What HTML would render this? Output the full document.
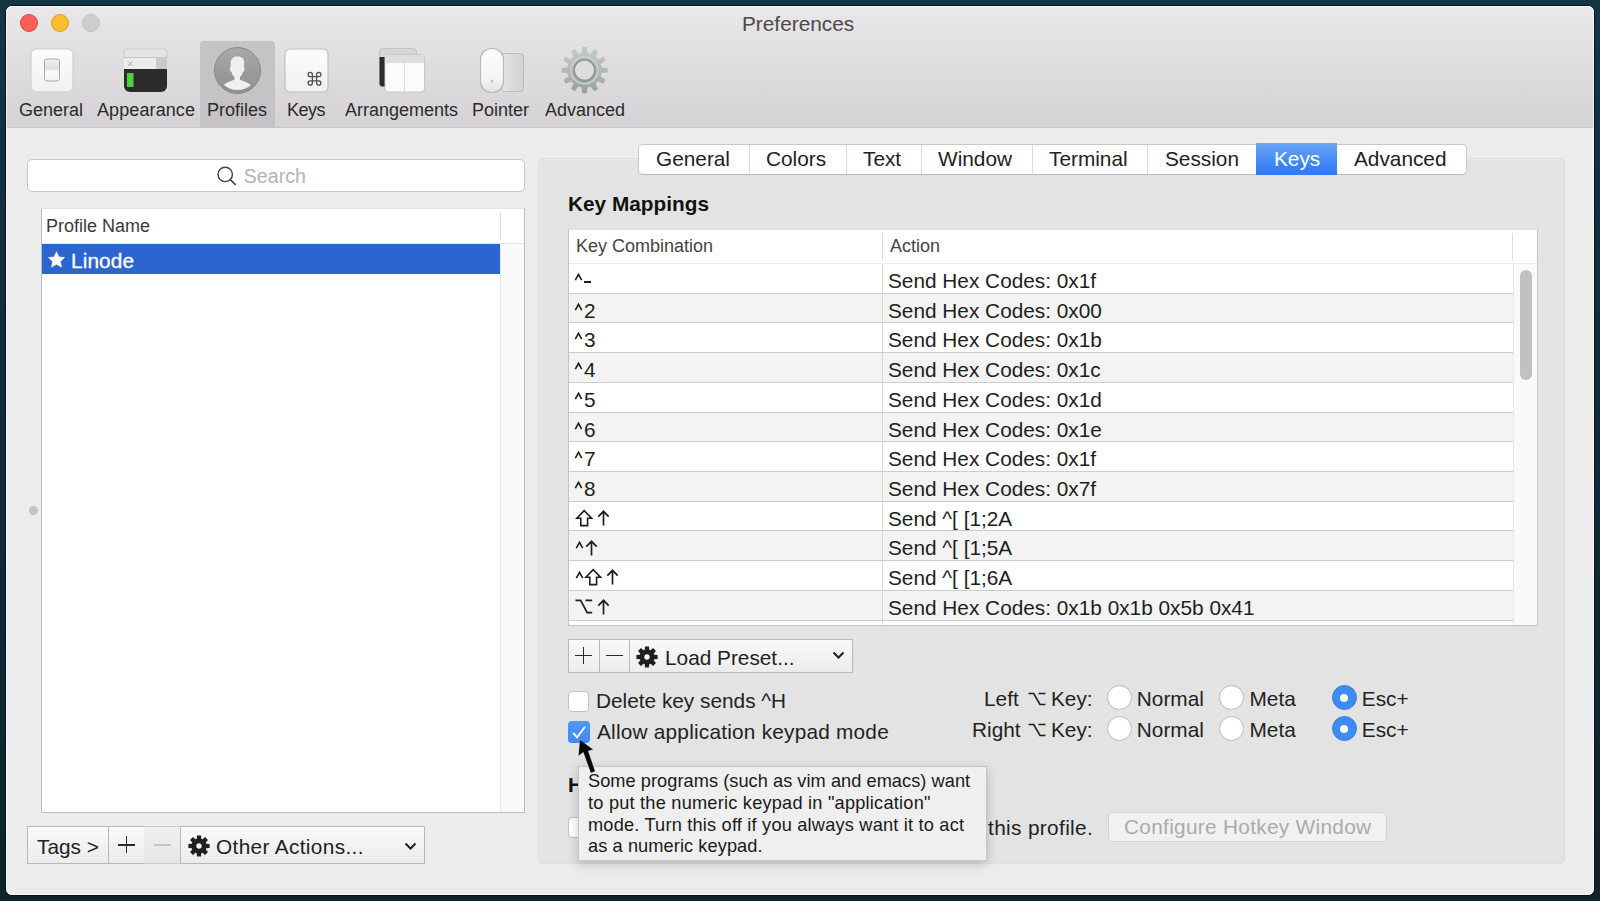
<!DOCTYPE html>
<html><head><meta charset="utf-8">
<style>
*{box-sizing:border-box;margin:0;padding:0}
html,body{width:1600px;height:901px;overflow:hidden;background:linear-gradient(#133647,#11293a 50%,#10222c);font-family:"Liberation Sans",sans-serif;color:#222}
.a{position:absolute}
.t{position:absolute;white-space:nowrap;line-height:1}
#win{position:absolute;left:6px;top:6px;width:1588px;height:889px;border-radius:6px;background:#ececec;box-shadow:0 0 0 1px #07141b}
#hl{position:absolute;left:6px;top:6px;width:1588px;height:889px;border-radius:6px;border:1.5px solid rgba(248,250,252,.85)}
#tb{position:absolute;left:6px;top:6px;width:1588px;height:122px;border-radius:6px 6px 0 0;background:linear-gradient(#e9e7e9,#d4d2d4);border-bottom:1px solid #c8c6c8}
.lbl{font-size:18px;color:#2b2b2b}
.row{position:absolute;left:569px;width:944px;height:29.71px;border-bottom:1px solid #cdcdcd}
.row .k{position:absolute;left:6px;top:7px;font-size:20.8px;line-height:1;white-space:nowrap;color:#1e1e1e}
.row .v{position:absolute;left:319px;top:7px;font-size:20.8px;line-height:1;white-space:nowrap;color:#1e1e1e}
.row .sep{position:absolute;left:313px;top:0;width:1px;height:100%;background:#d8d8d8}
.g{background:#f3f3f3}
.w{background:#fff}
.btn{position:absolute;background:linear-gradient(#f9f9f9,#ececec);border:1px solid #b8b8b8}
.f{font-size:20.8px;color:#222}
</style></head><body>
<div id="win"></div>
<div id="tb"></div>
<div id="hl"></div>
<!-- traffic lights -->
<div class="a" style="left:19.5px;top:14.3px;width:18px;height:18px;border-radius:50%;background:#fc5f57;border:1px solid #e0463f"></div>
<div class="a" style="left:50.5px;top:14.3px;width:18px;height:18px;border-radius:50%;background:#fdbc2e;border:1px solid #e0a020"></div>
<div class="a" style="left:81.5px;top:14.3px;width:18px;height:18px;border-radius:50%;background:#cfcdcf;border:1px solid #c2c0c2"></div>
<div class="t" style="left:742px;top:14px;font-size:20.8px;color:#4b4b4b">Preferences</div>

<!-- profiles highlight -->
<div class="a" style="left:200px;top:41px;width:75px;height:87px;background:#c5c3c5;border-radius:4px 4px 0 0"></div>

<!-- toolbar icons -->
<svg class="a" style="left:29px;top:47px" width="46" height="47" viewBox="0 0 46 47">
 <defs><linearGradient id="gw" x1="0" y1="0" x2="0" y2="1"><stop offset="0" stop-color="#fdfdfd"/><stop offset="1" stop-color="#f0f0f2"/></linearGradient>
 <linearGradient id="sw" x1="0" y1="0" x2="0" y2="1"><stop offset="0" stop-color="#f4f4f4"/><stop offset=".45" stop-color="#dcdcdc"/><stop offset=".55" stop-color="#fafafa"/><stop offset="1" stop-color="#f2f2f2"/></linearGradient></defs>
 <rect x="2" y="2" width="42" height="43" rx="5.5" fill="url(#gw)" stroke="#c9c9cb" stroke-width="1"/>
 <rect x="15.5" y="12" width="15" height="22" rx="2.5" fill="url(#sw)" stroke="#a9a9a9" stroke-width="1"/>
</svg>
<svg class="a" style="left:122px;top:47px" width="47" height="47" viewBox="0 0 47 47">
 <path d="M2 5a3 3 0 0 1 3-3h37a3 3 0 0 1 3 3v6H2z" fill="#e4e4e4" stroke="#cacaca" stroke-width="1"/><line x1="2" y1="11" x2="45" y2="11" stroke="#b9b9b9" stroke-width="1"/>
 <rect x="2" y="11" width="43" height="11" fill="#ececec"/>
 <rect x="34" y="11" width="11" height="11" fill="#c9c9c9"/>
 <path d="M6 14.5l4.5 4.5M10.5 14.5L6 19" stroke="#a79fb3" stroke-width="1"/>
 <path d="M2 22h43v17a6 6 0 0 1-6 6H8a6 6 0 0 1-6-6z" fill="#2b2b2b"/>
 <rect x="5" y="26" width="6.5" height="14" fill="#4fd23f"/>
</svg>
<svg class="a" style="left:212px;top:46px" width="51" height="49" viewBox="0 0 51 49">
 <defs><linearGradient id="pc" x1="0" y1="0" x2="0" y2="1"><stop offset="0" stop-color="#a9a9a9"/><stop offset="1" stop-color="#8f8f8f"/></linearGradient>
 <clipPath id="pcl"><circle cx="25.5" cy="23.5" r="20.5"/></clipPath></defs>
 <circle cx="25.5" cy="24.5" r="23" fill="url(#pc)" stroke="#878787" stroke-width="1"/>
 <path clip-path="url(#pcl)" d="M18.8 16c0-3.6 2.9-5.6 6.7-5.6s6.7 2 6.7 5.6l-.3 5.5c.8.2 1 1 .6 2.1l-.6 1.5c-.3.6-.6.8-1 .8-.6 2.6-1.9 4.3-3 5.2v2.6c2 .8 8.5 2.8 11.5 5.6V52H11V39.3c3-2.8 9.5-4.8 11.5-5.6v-2.6c-1.1-.9-2.4-2.6-3-5.2-.4 0-.7-.2-1-.8l-.6-1.5c-.4-1.1-.2-1.9.6-2.1z" fill="#efefef"/>
</svg>
<svg class="a" style="left:283px;top:47px" width="47" height="47" viewBox="0 0 47 47">
 <rect x="2" y="2" width="43" height="43" rx="5" fill="url(#gw)" stroke="#bdbdbf" stroke-width="1.1"/>
 <g fill="none" stroke="#4f4f4f" stroke-width="1.3"><path d="M29.4 29.6H33.6V33.8H29.4Z"/><path d="M29.4 29.6v-2.15a2.15 2.15 0 1 0-2.15 2.15h2.15M33.6 29.6v-2.15a2.15 2.15 0 1 1 2.15 2.15h-2.15M29.4 33.8v2.15a2.15 2.15 0 1 1-2.15-2.15h2.15M33.6 33.8v2.15a2.15 2.15 0 1 0 2.15-2.15h-2.15"/></g>
</svg>
<svg class="a" style="left:378px;top:47px" width="48" height="47" viewBox="0 0 48 47">
 <rect x="1.5" y="1.5" width="37" height="38" rx="3" fill="#d6d6d6" stroke="#c2c2c2" stroke-width="1"/>
 <path d="M1.5 10h6v29.5h-3a3 3 0 0 1-3-3z" fill="#2e2e2e"/>
 <rect x="7" y="7.5" width="39.5" height="37.5" rx="3" fill="#fbfbfb" stroke="#c6c6c6" stroke-width="1"/>
 <rect x="7.5" y="8" width="38.5" height="8" fill="#dedede"/>
 <line x1="26.5" y1="16" x2="26.5" y2="44.5" stroke="#dadada" stroke-width="1"/>
</svg>
<svg class="a" style="left:479px;top:47px" width="47" height="47" viewBox="0 0 47 47">
 <defs><linearGradient id="tp" x1="0" y1="0" x2="1" y2="0"><stop offset="0" stop-color="#e4e4e4"/><stop offset="1" stop-color="#d2d2d2"/></linearGradient></defs>
 <rect x="22.5" y="6.5" width="22" height="38" rx="3" fill="url(#tp)" stroke="#bdbdbd" stroke-width="1"/>
 <defs><linearGradient id="ms" x1="0" y1="0" x2="0" y2="1"><stop offset="0" stop-color="#fdfdfd"/><stop offset=".7" stop-color="#f4f4f4"/><stop offset="1" stop-color="#e2e2e2"/></linearGradient></defs><rect x="1.5" y="1.5" width="23" height="44" rx="11" fill="url(#ms)" stroke="#b9b9b9" stroke-width="1.2"/>
 <circle cx="13" cy="34" r="1.6" fill="#c4c4c4"/>
</svg>
<svg class="a" style="left:559px;top:45px" width="51" height="51" viewBox="0 0 51 51">
 <defs><linearGradient id="gg" x1="0" y1="0" x2="0" y2="1"><stop offset="0" stop-color="#c2c7c7"/><stop offset=".6" stop-color="#b0b5b5"/><stop offset="1" stop-color="#969b9b"/></linearGradient></defs>
 <path id="gear" fill="url(#gg)" fill-rule="evenodd" d="M22.73 8.02 L23.30 2.10 L27.70 2.10 L28.27 8.02 L31.69 8.94 L35.14 4.10 L38.95 6.30 L36.49 11.71 L38.99 14.21 L44.40 11.75 L46.60 15.56 L41.76 19.01 L42.68 22.43 L48.60 23.00 L48.60 27.40 L42.68 27.97 L41.76 31.39 L46.60 34.84 L44.40 38.65 L38.99 36.19 L36.49 38.69 L38.95 44.10 L35.14 46.30 L31.69 41.46 L28.27 42.38 L27.70 48.30 L23.30 48.30 L22.73 42.38 L19.31 41.46 L15.86 46.30 L12.05 44.10 L14.51 38.69 L12.01 36.19 L6.60 38.65 L4.40 34.84 L9.24 31.39 L8.32 27.97 L2.40 27.40 L2.40 23.00 L8.32 22.43 L9.24 19.01 L4.40 15.56 L6.60 11.75 L12.01 14.21 L14.51 11.71 L12.05 6.30 L15.86 4.10 L19.31 8.94Z M35.1 25.2 A9.6 9.6 0 1 0 15.9 25.2 A9.6 9.6 0 1 0 35.1 25.2Z"/>
 <circle cx="25.5" cy="25.2" r="10.5" fill="none" stroke="#8d9393" stroke-width="1.5"/>
 <circle cx="25.5" cy="25.2" r="13.6" fill="none" stroke="#cdd3d3" stroke-width="1.3"/>
</svg>

<!-- toolbar labels -->
<div class="t lbl" style="left:19px;top:101px">General</div>
<div class="t lbl" style="left:97px;top:101px;letter-spacing:.1px">Appearance</div>
<div class="t lbl" style="left:207px;top:101px">Profiles</div>
<div class="t lbl" style="left:287px;top:101px;letter-spacing:-.5px">Keys</div>
<div class="t lbl" style="left:345px;top:101px">Arrangements</div>
<div class="t lbl" style="left:472px;top:101px">Pointer</div>
<div class="t lbl" style="left:545px;top:101px">Advanced</div>

<!-- search -->
<div class="a" style="left:27px;top:159px;width:498px;height:33px;background:#fff;border:1px solid #c6c6c6;border-radius:5px"></div>
<svg class="a" style="left:216px;top:166px" width="22" height="22" viewBox="0 0 22 22"><circle cx="9.2" cy="8.4" r="7.2" fill="none" stroke="#444" stroke-width="1.45"/><line x1="14.3" y1="13.6" x2="19.6" y2="18.9" stroke="#444" stroke-width="1.6"/></svg>
<div class="t" style="left:243.8px;top:167.3px;font-size:19.6px;color:#b3b3b3">Search</div>

<!-- left table -->
<div class="a" style="left:41px;top:208px;width:484px;height:605px;background:#fff;border:1px solid #bdbdbd;border-top-color:#e4e4e4"></div>
<div class="a" style="left:500px;top:244px;width:24px;height:568px;background:#fafafa;border-left:1px solid #e6e6e6"></div>
<div class="a" style="left:500px;top:212px;width:1px;height:28px;background:#dcdcdc"></div>
<div class="a" style="left:42px;top:243px;width:482px;height:1px;background:#e6e6e6"></div>
<div class="t" style="left:46px;top:217px;font-size:18px;color:#3a3a3a">Profile Name</div>
<div class="a" style="left:42px;top:244px;width:458px;height:29.5px;background:#2c64d0"></div>
<svg class="a" style="left:47.5px;top:251px" width="18" height="18" viewBox="0 0 18 18"><path d="M8.50 0.60 L10.91 5.88 L16.68 6.54 L12.40 10.47 L13.55 16.16 L8.50 13.30 L3.45 16.16 L4.60 10.47 L0.32 6.54 L6.09 5.88Z" fill="#fff" stroke="#fff" stroke-width=".5" stroke-linejoin="round"/></svg>
<div class="t" style="left:71px;top:250.5px;font-size:20.8px;color:#fff;-webkit-text-stroke:.3px #fff;letter-spacing:.1px">Linode</div>

<!-- split dot -->
<div class="a" style="left:29px;top:506px;width:9px;height:9px;border-radius:50%;background:#c3c3c3"></div>

<!-- bottom-left buttons -->
<div class="btn" style="left:27px;top:826px;width:82px;height:38px"></div>
<div class="t f" style="left:37px;top:837px">Tags &gt;</div>
<div class="btn" style="left:108px;top:826px;width:37px;height:38px"></div>
<div class="a" style="left:118px;top:844px;width:17px;height:1.5px;background:#2a2a2a"></div>
<div class="a" style="left:125.8px;top:836px;width:1.5px;height:17px;background:#2a2a2a"></div>
<div class="a" style="left:144px;top:826px;width:37px;height:38px;background:linear-gradient(#efefef,#e6e6e6);border-top:1px solid #cdcdcd;border-bottom:1px solid #cdcdcd"></div>
<div class="a" style="left:154px;top:844px;width:17px;height:1.5px;background:#c4c4c4"></div>
<div class="btn" style="left:180px;top:826px;width:245px;height:38px"></div>
<div class="t f" style="left:216px;top:837px;letter-spacing:.35px">Other Actions...</div>
<svg class="a" style="left:186.7px;top:834px" width="24" height="24" viewBox="0 0 24 24"><path fill="#1f1f1f" fill-rule="evenodd" d="M9.75 4.74 L9.96 1.39 L14.04 1.39 L14.25 4.74 L15.55 5.28 L18.06 3.06 L20.94 5.94 L18.72 8.45 L19.26 9.75 L22.61 9.96 L22.61 14.04 L19.26 14.25 L18.72 15.55 L20.94 18.06 L18.06 20.94 L15.55 18.72 L14.25 19.26 L14.04 22.61 L9.96 22.61 L9.75 19.26 L8.45 18.72 L5.94 20.94 L3.06 18.06 L5.28 15.55 L4.74 14.25 L1.39 14.04 L1.39 9.96 L4.74 9.75 L5.28 8.45 L3.06 5.94 L5.94 3.06 L8.45 5.28Z M14.7 12 A2.7 2.7 0 1 0 9.3 12 A2.7 2.7 0 1 0 14.7 12Z"/></svg>
<svg class="a" style="left:403.5px;top:842px" width="13" height="9" viewBox="0 0 13 9"><path d="M1.5 1.5l5 5 5-5" fill="none" stroke="#1f1f1f" stroke-width="2"/></svg>

<!-- right panel -->
<div class="a" style="left:538px;top:158px;width:1027px;height:706px;background:#e3e3e3;border:1px solid #dedede;border-radius:5px;box-shadow:inset 1px 1px 0 #e9e9e9"></div>
<!-- tabs -->
<div class="a" style="left:638px;top:144px;width:829px;height:31px;background:#fff;border:1px solid #c9c9c9;border-bottom-color:#b9b9b9;border-radius:5px;overflow:hidden">
  <div class="a" style="left:110px;top:0;width:1px;height:30px;background:#dcdcdc"></div>
  <div class="a" style="left:207px;top:0;width:1px;height:30px;background:#dcdcdc"></div>
  <div class="a" style="left:282px;top:0;width:1px;height:30px;background:#dcdcdc"></div>
  <div class="a" style="left:393px;top:0;width:1px;height:30px;background:#dcdcdc"></div>
  <div class="a" style="left:508px;top:0;width:1px;height:30px;background:#dcdcdc"></div>
</div>
<div class="a" style="left:1256px;top:143px;width:81px;height:31.5px;background:linear-gradient(#6aa7f7,#3a84f3 70%,#3079f0)"></div>
<div class="t f" style="left:656px;top:149px">General</div>
<div class="t f" style="left:766px;top:149px">Colors</div>
<div class="t f" style="left:863px;top:149px">Text</div>
<div class="t f" style="left:938px;top:149px">Window</div>
<div class="t f" style="left:1049px;top:149px">Terminal</div>
<div class="t f" style="left:1165px;top:149px">Session</div>
<div class="t f" style="left:1274px;top:149px;color:#fff">Keys</div>
<div class="t f" style="left:1354px;top:149px">Advanced</div>

<div class="t" style="left:568px;top:194px;font-size:20.8px;font-weight:bold;color:#111">Key Mappings</div>

<!-- key table -->
<div class="a" style="left:568px;top:229px;width:970px;height:397px;background:#fff;border:1px solid #c4c4c4;border-top-color:#e0e0e0;overflow:hidden">
</div>
<div class="a" style="left:882px;top:233px;width:1px;height:28px;background:#dedede"></div>
<div class="a" style="left:1512px;top:233px;width:1px;height:28px;background:#dedede"></div>
<div class="a" style="left:569px;top:263px;width:968px;height:1px;background:#ececec"></div>
<div class="t" style="left:576px;top:237px;font-size:18px;color:#444">Key Combination</div>
<div class="t" style="left:890px;top:237px;font-size:18px;color:#444">Action</div>
<div class="a" style="left:569px;top:264px;width:944px;height:361px;overflow:hidden">
<div style="position:absolute;left:-569px;top:-264px;width:1600px;height:901px">
<div class="row w" style="top:264.00px"><div class="sep"></div><svg class="a" style="left:5.2px;top:9.0px" width="9" height="8" viewBox="0 0 9 8"><path d="M1.3 7.2L4.5 1.3 7.7 7.2" fill="none" stroke="#1e1e1e" stroke-width="1.6" stroke-linejoin="miter"/></svg><div class="a" style="left:15px;top:17px;width:7px;height:1.8px;background:#1e1e1e"></div><div class="v">Send Hex Codes: 0x1f</div></div>
<div class="row g" style="top:293.71px"><div class="sep"></div><svg class="a" style="left:5.2px;top:9.0px" width="9" height="8" viewBox="0 0 9 8"><path d="M1.3 7.2L4.5 1.3 7.7 7.2" fill="none" stroke="#1e1e1e" stroke-width="1.6" stroke-linejoin="miter"/></svg><div class="k" style="left:15px">2</div><div class="v">Send Hex Codes: 0x00</div></div>
<div class="row w" style="top:323.42px"><div class="sep"></div><svg class="a" style="left:5.2px;top:9.0px" width="9" height="8" viewBox="0 0 9 8"><path d="M1.3 7.2L4.5 1.3 7.7 7.2" fill="none" stroke="#1e1e1e" stroke-width="1.6" stroke-linejoin="miter"/></svg><div class="k" style="left:15px">3</div><div class="v">Send Hex Codes: 0x1b</div></div>
<div class="row g" style="top:353.13px"><div class="sep"></div><svg class="a" style="left:5.2px;top:9.0px" width="9" height="8" viewBox="0 0 9 8"><path d="M1.3 7.2L4.5 1.3 7.7 7.2" fill="none" stroke="#1e1e1e" stroke-width="1.6" stroke-linejoin="miter"/></svg><div class="k" style="left:15px">4</div><div class="v">Send Hex Codes: 0x1c</div></div>
<div class="row w" style="top:382.84px"><div class="sep"></div><svg class="a" style="left:5.2px;top:9.0px" width="9" height="8" viewBox="0 0 9 8"><path d="M1.3 7.2L4.5 1.3 7.7 7.2" fill="none" stroke="#1e1e1e" stroke-width="1.6" stroke-linejoin="miter"/></svg><div class="k" style="left:15px">5</div><div class="v">Send Hex Codes: 0x1d</div></div>
<div class="row g" style="top:412.55px"><div class="sep"></div><svg class="a" style="left:5.2px;top:9.0px" width="9" height="8" viewBox="0 0 9 8"><path d="M1.3 7.2L4.5 1.3 7.7 7.2" fill="none" stroke="#1e1e1e" stroke-width="1.6" stroke-linejoin="miter"/></svg><div class="k" style="left:15px">6</div><div class="v">Send Hex Codes: 0x1e</div></div>
<div class="row w" style="top:442.26px"><div class="sep"></div><svg class="a" style="left:5.2px;top:9.0px" width="9" height="8" viewBox="0 0 9 8"><path d="M1.3 7.2L4.5 1.3 7.7 7.2" fill="none" stroke="#1e1e1e" stroke-width="1.6" stroke-linejoin="miter"/></svg><div class="k" style="left:15px">7</div><div class="v">Send Hex Codes: 0x1f</div></div>
<div class="row g" style="top:471.97px"><div class="sep"></div><svg class="a" style="left:5.2px;top:9.0px" width="9" height="8" viewBox="0 0 9 8"><path d="M1.3 7.2L4.5 1.3 7.7 7.2" fill="none" stroke="#1e1e1e" stroke-width="1.6" stroke-linejoin="miter"/></svg><div class="k" style="left:15px">8</div><div class="v">Send Hex Codes: 0x7f</div></div>
<div class="row w" style="top:501.68px"><div class="sep"></div><svg class="a" style="left:5.9px;top:7.0px" width="19" height="18" viewBox="0 0 19 18"><path d="M9.2 1.6L1.8 9.2H5.8V16.6H12.6V9.2H16.6Z" fill="none" stroke="#1e1e1e" stroke-width="1.6" stroke-linejoin="miter"/></svg><svg class="a" style="left:27.6px;top:8.2px" width="13" height="16" viewBox="0 0 13 16"><path d="M6.5 1.2V15.5M1.3 6.6L6.5 1.3 11.7 6.6" fill="none" stroke="#1e1e1e" stroke-width="1.7" stroke-linejoin="miter"/></svg><div class="v">Send ^[ [1;2A</div></div>
<div class="row g" style="top:531.39px"><div class="sep"></div><svg class="a" style="left:5.5px;top:9.2px" width="9" height="8" viewBox="0 0 9 8"><path d="M1.3 7.2L4.5 1.3 7.7 7.2" fill="none" stroke="#1e1e1e" stroke-width="1.6" stroke-linejoin="miter"/></svg><svg class="a" style="left:16.4px;top:8.6px" width="13" height="16" viewBox="0 0 13 16"><path d="M6.5 1.2V15.5M1.3 6.6L6.5 1.3 11.7 6.6" fill="none" stroke="#1e1e1e" stroke-width="1.7" stroke-linejoin="miter"/></svg><div class="v">Send ^[ [1;5A</div></div>
<div class="row w" style="top:561.10px"><div class="sep"></div><svg class="a" style="left:5.5px;top:9.5px" width="9" height="8" viewBox="0 0 9 8"><path d="M1.3 7.2L4.5 1.3 7.7 7.2" fill="none" stroke="#1e1e1e" stroke-width="1.6" stroke-linejoin="miter"/></svg><svg class="a" style="left:15.2px;top:7.0px" width="19" height="18" viewBox="0 0 19 18"><path d="M9.2 1.6L1.8 9.2H5.8V16.6H12.6V9.2H16.6Z" fill="none" stroke="#1e1e1e" stroke-width="1.6" stroke-linejoin="miter"/></svg><svg class="a" style="left:36.8px;top:8.2px" width="13" height="16" viewBox="0 0 13 16"><path d="M6.5 1.2V15.5M1.3 6.6L6.5 1.3 11.7 6.6" fill="none" stroke="#1e1e1e" stroke-width="1.7" stroke-linejoin="miter"/></svg><div class="v">Send ^[ [1;6A</div></div>
<div class="row g" style="top:590.81px"><div class="sep"></div><svg class="a" style="left:6.2px;top:8.4px" width="18" height="15" viewBox="0 0 18 15"><path d="M0.5 1.3H5.6L12.2 13.7H17.2M10.5 1.3H17.2" fill="none" stroke="#1e1e1e" stroke-width="1.7" stroke-linejoin="miter"/></svg><svg class="a" style="left:27.9px;top:8.4px" width="13" height="16" viewBox="0 0 13 16"><path d="M6.5 1.2V15.5M1.3 6.6L6.5 1.3 11.7 6.6" fill="none" stroke="#1e1e1e" stroke-width="1.7" stroke-linejoin="miter"/></svg><div class="v">Send Hex Codes: 0x1b 0x1b 0x5b 0x41</div></div>
<div class="row w" style="top:620.52px"><div class="sep"></div><div class="v"></div></div>
</div></div>
<div class="a" style="left:1513px;top:264px;width:24px;height:361px;background:#fafafa;border-left:1px solid #e8e8e8"></div>
<div class="a" style="left:1519.5px;top:269.5px;width:12.5px;height:110px;background:#c1c1c1;border-radius:6px"></div>

<!-- +/- load preset -->
<div class="btn" style="left:568px;top:639px;width:32px;height:34px"></div>
<div class="a" style="left:575px;top:654.5px;width:17px;height:1.5px;background:#2a2a2a"></div>
<div class="a" style="left:582.8px;top:647px;width:1.5px;height:17px;background:#2a2a2a"></div>
<div class="btn" style="left:599px;top:639px;width:31px;height:34px"></div>
<div class="a" style="left:606px;top:654.5px;width:17px;height:1.5px;background:#2a2a2a"></div>
<div class="btn" style="left:629px;top:639px;width:224px;height:34px"></div>
<div class="t f" style="left:665px;top:648px">Load Preset...</div>
<svg class="a" style="left:635px;top:645px" width="24" height="24" viewBox="0 0 24 24"><path fill="#1f1f1f" fill-rule="evenodd" d="M9.75 4.74 L9.96 1.39 L14.04 1.39 L14.25 4.74 L15.55 5.28 L18.06 3.06 L20.94 5.94 L18.72 8.45 L19.26 9.75 L22.61 9.96 L22.61 14.04 L19.26 14.25 L18.72 15.55 L20.94 18.06 L18.06 20.94 L15.55 18.72 L14.25 19.26 L14.04 22.61 L9.96 22.61 L9.75 19.26 L8.45 18.72 L5.94 20.94 L3.06 18.06 L5.28 15.55 L4.74 14.25 L1.39 14.04 L1.39 9.96 L4.74 9.75 L5.28 8.45 L3.06 5.94 L5.94 3.06 L8.45 5.28Z M14.7 12 A2.7 2.7 0 1 0 9.3 12 A2.7 2.7 0 1 0 14.7 12Z"/></svg>
<svg class="a" style="left:832px;top:651px" width="13" height="9" viewBox="0 0 13 9"><path d="M1.5 1.5l5 5 5-5" fill="none" stroke="#1f1f1f" stroke-width="2"/></svg>

<!-- checkboxes -->
<div class="a" style="left:568px;top:690.5px;width:21px;height:21px;background:#fff;border:1px solid #c2c2c2;border-radius:4px"></div>
<div class="t f" style="left:596px;top:691px">Delete key sends ^H</div>
<div class="a" style="left:567.5px;top:721px;width:22px;height:22px;background:linear-gradient(#5099f7,#3f8af2);border-radius:4px"></div>
<svg class="a" style="left:567.5px;top:721px" width="22" height="22" viewBox="0 0 22 22"><path d="M5.2 12l3.9 4.3L17 5.8" fill="none" stroke="#fff" stroke-width="1.9"/></svg>
<div class="t f" style="left:597px;top:722px;letter-spacing:.22px">Allow application keypad mode</div>

<!-- radios -->
<div class="t f" style="left:984px;top:689px">Left</div><div class="a" style="left:1028px;top:692px"><svg width="18" height="14" viewBox="0 0 18 14" style="display:inline-block"><path d="M0.5 1.5h5.2l6.3 11h5.5M10.5 1.5h7" fill="none" stroke="#1e1e1e" stroke-width="1.6"/></svg></div><div class="t f" style="left:1051px;top:689px">Key:</div>
<div class="t f" style="left:972px;top:720px">Right</div><div class="a" style="left:1028px;top:723px"><svg width="18" height="14" viewBox="0 0 18 14" style="display:inline-block"><path d="M0.5 1.5h5.2l6.3 11h5.5M10.5 1.5h7" fill="none" stroke="#1e1e1e" stroke-width="1.6"/></svg></div><div class="t f" style="left:1051px;top:720px">Key:</div>
<div class="a" style="left:1106.5px;top:685.0px;width:25px;height:25px;border-radius:50%;background:#fff;border:1px solid #bababa"></div>
<div class="t f" style="left:1136.8px;top:689.0px">Normal</div>
<div class="a" style="left:1219.2px;top:685.0px;width:25px;height:25px;border-radius:50%;background:#fff;border:1px solid #bababa"></div>
<div class="t f" style="left:1249.5px;top:689.0px">Meta</div>
<div class="a" style="left:1331.5px;top:685.0px;width:25px;height:25px;border-radius:50%;background:#3d8bf3;border:1px solid #3a80e6"></div><div class="a" style="left:1340px;top:693.5px;width:8px;height:8px;border-radius:50%;background:#fff"></div>
<div class="t f" style="left:1361.8px;top:689.0px">Esc+</div>
<div class="a" style="left:1106.5px;top:716.1px;width:25px;height:25px;border-radius:50%;background:#fff;border:1px solid #bababa"></div>
<div class="t f" style="left:1136.8px;top:720.1px">Normal</div>
<div class="a" style="left:1219.2px;top:716.1px;width:25px;height:25px;border-radius:50%;background:#fff;border:1px solid #bababa"></div>
<div class="t f" style="left:1249.5px;top:720.1px">Meta</div>
<div class="a" style="left:1331.5px;top:716.1px;width:25px;height:25px;border-radius:50%;background:#3d8bf3;border:1px solid #3a80e6"></div><div class="a" style="left:1340px;top:724.6px;width:8px;height:8px;border-radius:50%;background:#fff"></div>
<div class="t f" style="left:1361.8px;top:720.1px">Esc+</div>
<!-- hotkey section -->
<div class="t" style="left:568px;top:775px;font-size:20.8px;font-weight:bold;color:#111">Hotkey</div>
<div class="a" style="left:568px;top:817px;width:21px;height:21px;background:#fff;border:1px solid #c2c2c2;border-radius:4px"></div>
<div class="t f" style="left:988px;top:818px;letter-spacing:.35px">this profile.</div>
<div class="a" style="left:1108px;top:812px;width:279px;height:30px;background:#f1f1f1;border:1px solid #d2d2d2;border-radius:5px"></div>
<div class="t f" style="left:1124px;top:817px;color:#ababab;letter-spacing:.3px">Configure Hotkey Window</div>

<!-- tooltip -->
<div class="a" style="left:578px;top:766px;width:409px;height:95px;background:#efefef;border:1px solid #c6c6c6;box-shadow:0 3px 10px rgba(0,0,0,.2)"></div>
<div class="t" style="left:588px;top:771.0px;font-size:18.2px;line-height:21.8px;color:#1a1a1a;letter-spacing:0.05px">Some programs (such as vim and emacs) want</div>
<div class="t" style="left:588px;top:792.8px;font-size:18.2px;line-height:21.8px;color:#1a1a1a;letter-spacing:0.22px">to put the numeric keypad in "application"</div>
<div class="t" style="left:588px;top:814.6px;font-size:18.2px;line-height:21.8px;color:#1a1a1a;letter-spacing:0.2px">mode. Turn this off if you always want it to act</div>
<div class="t" style="left:588px;top:836.4px;font-size:18.2px;line-height:21.8px;color:#1a1a1a;letter-spacing:0.09px">as a numeric keypad.</div>


<!-- cursor -->
<svg class="a" style="left:570px;top:735px" width="32" height="42" viewBox="0 0 32 42"><path d="M9.8 4.5L8.4 21 13.3 17.2 20.8 38 25.2 36.4 18.2 15.9 23.2 14.6z" fill="#080808" stroke="rgba(255,255,255,.5)" stroke-width=".5" stroke-linejoin="round"/></svg>

</body></html>
